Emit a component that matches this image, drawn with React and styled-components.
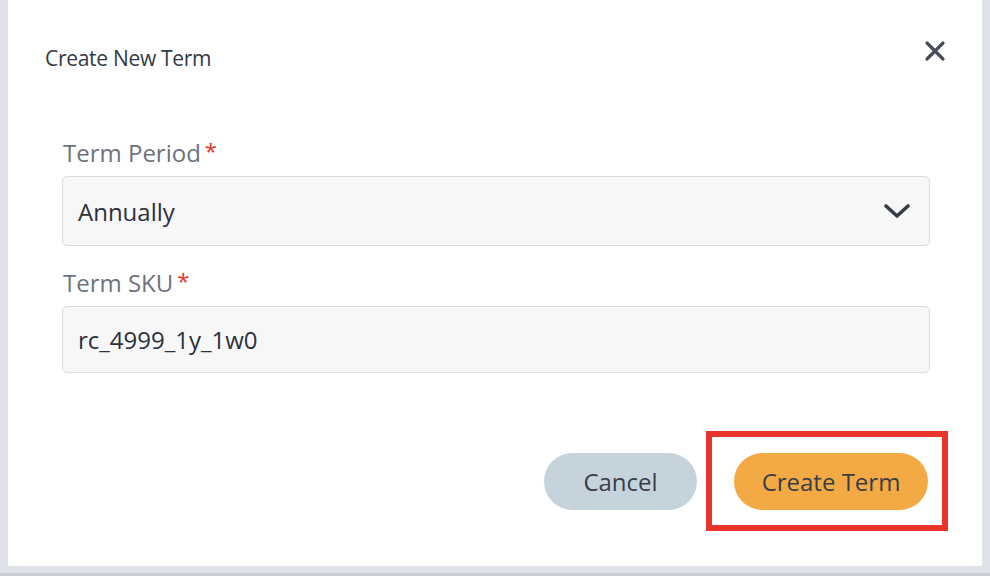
import React from "react";
import styled, { createGlobalStyle } from "styled-components";

const GlobalStyle = createGlobalStyle`
  html, body {
    margin: 0;
    padding: 0;
    background: #dfe1e8;
  }
  * {
    box-sizing: border-box;
  }
`;

const Page = styled.div`
  height: 576px;
  background: #dfe1e8;
  box-shadow: inset 0 -3px 0 #cbccd2;
  font-family: "Open Sans", "Noto Sans", sans-serif;
`;

const Modal = styled.div`
  margin-left: 8px;
  width: 974px;
  height: 566px;
  background: #ffffff;
  display: flex;
  flex-direction: column;
`;

const Header = styled.div`
  display: flex;
  justify-content: space-between;
  align-items: flex-start;
  padding: 43px 35px 0 37px;
`;

const Title = styled.div`
  font-size: 21px;
  line-height: 30px;
  letter-spacing: -0.3px;
  color: #333a45;
`;

const CloseButton = styled.button`
  border: 0;
  background: none;
  padding: 0;
  margin-top: -4px;
  width: 24px;
  height: 24px;
  cursor: pointer;
  color: #474c57;
  display: flex;
`;

const Form = styled.div`
  display: flex;
  flex-direction: column;
  padding: 62px 52px 0 54px;
`;

const Field = styled.div`
  display: flex;
  flex-direction: column;
  gap: 11px;
  margin-bottom: ${(p) => p.$spacing || 0}px;
`;

const Label = styled.div`
  font-size: 24px;
  line-height: 24px;
  padding-top: 6px;
  color: #6d727b;
  padding-left: 1px;
`;

const Required = styled.span`
  color: #e8332a;
  margin-left: 4px;
  font-size: 22px;
  position: relative;
  top: -3px;
`;

const Box = styled.div`
  height: ${(p) => p.$height}px;
  background: #f7f7f7;
  border: 1px solid #dcdcdc;
  border-radius: 5px;
  display: flex;
  align-items: center;
  justify-content: space-between;
  padding: 0 18px 0 15px;
  font-size: 24px;
  color: #2b313b;
`;

const Actions = styled.div`
  display: flex;
  justify-content: flex-end;
  align-items: center;
  padding: 58px 34px 0 0;
`;

const Button = styled.button`
  width: ${(p) => p.$width}px;
  height: 57px;
  border: 0;
  border-radius: 29px;
  background: ${(p) => p.$bg};
  color: #383e49;
  font-family: "Open Sans", "Noto Sans", sans-serif;
  font-size: 24px;
  cursor: pointer;
  padding: 0;
`;

const Highlight = styled.div`
  border: 6px solid #e8342a;
  padding: 16px 14px 15px 22px;
  margin-left: 9px;
`;

const App = () => {
  return (
    <Page>
      <GlobalStyle />
      <Modal>
        <Header>
          <Title>Create New Term</Title>
          <CloseButton aria-label="Close">
            <svg width="24" height="24" viewBox="0 0 24 24">
              <path d="M4 4 L20 20 M20 4 L4 20" stroke="currentColor" strokeWidth="3.2" strokeLinecap="round" fill="none" />
            </svg>
          </CloseButton>
        </Header>
        <Form>
          <Field $spacing={19}>
            <Label>
              Term Period<Required>*</Required>
            </Label>
            <Box $height={70}>
              Annually
              <svg width="28" height="16" viewBox="0 0 28 16">
                <path d="M3 3 L14 13 L25 3" stroke="#363c47" strokeWidth="3.6" strokeLinecap="round" strokeLinejoin="round" fill="none" />
              </svg>
            </Box>
          </Field>
          <Field>
            <Label>
              Term SKU<Required>*</Required>
            </Label>
            <Box $height={67}>rc_4999_1y_1w0</Box>
          </Field>
        </Form>
        <Actions>
          <Button $width={153} $bg="#c5d3dc">Cancel</Button>
          <Highlight>
            <Button $width={194} $bg="#f3aa45">Create Term</Button>
          </Highlight>
        </Actions>
      </Modal>
    </Page>
  );
};

export default App;
